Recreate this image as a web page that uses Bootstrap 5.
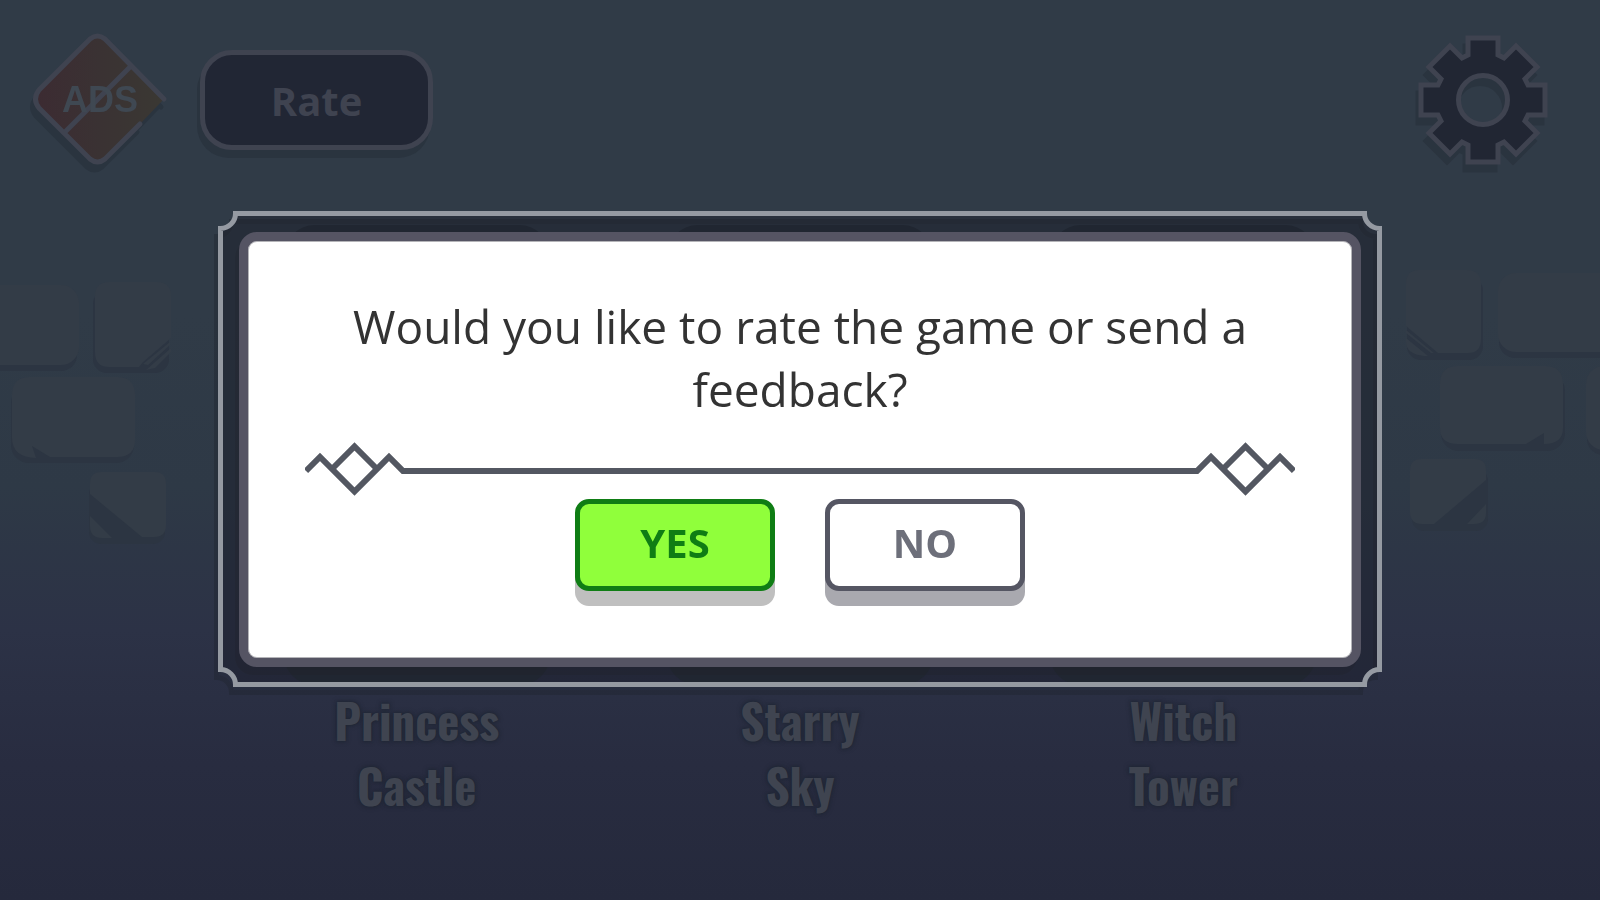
<!DOCTYPE html>
<html lang="en">
<head>
<meta charset="utf-8">
<meta name="viewport" content="width=device-width, initial-scale=1">
<title>Rate the game</title>
<link href="https://cdn.jsdelivr.net/npm/bootstrap@5.3.0/dist/css/bootstrap.min.css" rel="stylesheet">
<style>
  body {
    font-family: "Open Sans", "Noto Sans", sans-serif;
    background: linear-gradient(#303b47 0%, #303b47 35%, #2e3946 54%, #2c3246 70%, #282c40 85%, #25293c 100%);
  }
  .top-bar { padding: 30px 47px 0 28px; }
  .icon-btn { width: 140px; height: 140px; }
  .icon-btn svg { display: block; overflow: visible; }
  .cast { filter: drop-shadow(-3px 8px 0 #2a343f); }
  .rate-btn {
    width: 233px; height: 100px; margin-left: 32px; padding: 2px 0 0;
    border: 5px solid #3f4350; border-radius: 32px;
    background: #212634; color: #3f4350;
    font-size: 40px; line-height: 54px;
    box-shadow: -3px 8px 0 #2a343f;
  }
  .bricks { top: 260px; z-index: -1; }
  .stone { fill: #333c47; }
  .shade { fill: #2c3542; }
  .level-list { max-width: 1150px; margin-top: 55px; }
  .level-card { width: 268px; height: 460px; border-radius: 32px; background: #262e38; margin-bottom: 3px; }
  .level-name {
    font-family: Oswald, Roboto, sans-serif;
    font-size: 47px; line-height: 65px; color: #3f4450;
    text-shadow: 0 0 5px #1f2633, 0 0 3px #1f2633;
  }
  .ask-dialog { max-width: 1164px; padding-bottom: 2px; }
  .frame {
    border-style: solid; border-width: 21px 21px 20px;
    border-image: url("data:image/svg+xml,%3Csvg xmlns='http://www.w3.org/2000/svg' width='100' height='100'%3E%3Cpath d='M17.500 2.500H82.500A15 15 0 0 0 97.500 17.500V82.500A15 15 0 0 0 82.500 97.500H17.500A15 15 0 0 0 2.500 82.500V17.500A15 15 0 0 0 17.500 2.500Z' fill='%231c1e28' fill-opacity='.35' stroke='%23959aa2' stroke-width='5'/%3E%3C/svg%3E") 20 fill / 20px stretch;
    filter: drop-shadow(-4px 8px 0 rgba(28, 34, 44, .35));
  }
  .panel {
    border: 9px solid #555463; border-radius: 18px; background: #fff;
    padding: 54px 57px 52px; box-shadow: inset 0 0 0 1px #b4b4b8;
  }
  .question { font-size: 46px; line-height: 63px; color: #333; padding: 0 30px; }
  .divider { margin: 21px 0 3px; color: #535761; }
  .divider-line { height: 6px; background: #535761; margin-top: 4px; }
  .choice { width: 200px; height: 92px; border: 5px solid; border-radius: 14px; font-size: 40px; line-height: 54px; padding: 0 0 4px; }
  .choice-yes { background: #90ff3b; border-color: #0f7d14; color: #0f7d14; box-shadow: 0 15px 0 #bfbfbf; }
  .choice-no { background: #fff; border-color: #555663; color: #6d6f7a; box-shadow: 0 15px 0 #a9a9af; }
  .choices { gap: 50px; margin-bottom: 15px; }
</style>
</head>
<body class="min-vh-100 overflow-hidden">

<svg class="bricks position-absolute start-0" width="180" height="290" aria-hidden="true">
  <g class="shade">
    <rect x="-30" y="34" width="107" height="77" rx="16"/>
    <rect x="93" y="30" width="76" height="83" rx="14"/>
    <rect x="11" y="125" width="123" height="78" rx="18"/>
    <rect x="89" y="222" width="76" height="62" rx="12"/>
  </g>
  <g class="stone">
    <rect x="-30" y="25" width="109" height="80" rx="18"/>
    <path d="M109 22H157Q171 22 171 36V78L143 102L139 107H109Q95 107 95 92V36Q95 22 109 22Z"/>
    <path d="M143 104L170 82V85L148 105ZM146 110L171 88V92L155 108Z"/>
    <path d="M30 117H117Q135 117 135 135V180Q135 197 117 197H50L32 186L36 198Q12 197 12 178V135Q12 117 30 117Z"/>
    <path d="M101 212H155Q166 212 166 224V265Q166 277 154 277H142L90 234V224Q90 212 101 212Z"/>
    <path d="M90 256L112 278H102Q90 278 90 266Z"/>
  </g>
</svg>
<svg class="bricks position-absolute end-0" width="200" height="290" aria-hidden="true">
  <g class="shade">
    <rect x="7" y="17" width="76" height="83" rx="14"/>
    <rect x="99" y="20" width="140" height="78" rx="16"/>
    <rect x="41" y="113" width="124" height="78" rx="18"/>
    <rect x="187" y="113" width="80" height="82" rx="16"/>
    <rect x="12" y="209" width="76" height="62" rx="12"/>
  </g>
  <g class="stone">
    <path d="M19 10H67Q81 10 81 24V79Q81 93 68 93H38L6 66V24Q6 10 19 10Z"/>
    <path d="M6 70L34 93H31L6 73ZM6 78L28 96H24Q6 94 6 82Z"/>
    <rect x="98" y="13" width="140" height="79" rx="18"/>
    <path d="M58 106H145Q163 106 163 124V168Q163 184 144 184L144 173L126 184H58Q40 184 40 168V124Q40 106 58 106Z"/>
    <rect x="186" y="106" width="80" height="84" rx="18"/>
    <path d="M21 199H75Q86 199 86 211V220L34 264H22Q10 264 10 252V211Q10 199 21 199Z"/>
    <path d="M86 244V253Q86 264 74 264H67Z"/>
  </g>
</svg>

<header class="top-bar d-flex align-items-center">
  <button type="button" class="icon-btn btn p-0 border-0" aria-label="Remove ads">
    <svg class="cast" width="140" height="140" viewBox="0 0 140 140">
      <defs><linearGradient id="adsFill"><stop offset="0" stop-color="#3c2b32"/><stop offset=".5" stop-color="#3a3233"/><stop offset="1" stop-color="#3a3833"/></linearGradient></defs>
      <path d="M136 69L77 9Q69.500 3 62 9L11 60Q4 69 11 78L62 129Q69.500 135 77 129L112 94L136 69Z" fill="url(#adsFill)"/>
      <path d="M136 69L77 9Q69.500 3 62 9L11 60Q4 69 11 78L62 129Q69.500 135 77 129L112 94M102 37L37 102" fill="none" stroke="#3f4350" stroke-width="5" stroke-linecap="round"/>
      <text x="72" y="82" text-anchor="middle" font-family="Liberation Sans, sans-serif" font-weight="700" font-size="36" fill="#3f4852">ADS</text>
    </svg>
  </button>
  <button type="button" class="rate-btn btn fw-bold">Rate</button>
  <button type="button" class="icon-btn btn p-0 border-0 ms-auto" aria-label="Settings">
    <svg class="cast" width="140" height="140" viewBox="-70 -70 140 140">
      <path fill-rule="evenodd" fill="#212633" stroke="#3f4350" stroke-width="5" d="M-15 -62H15V-45L21 -42L33 -54L54 -33L42 -21L45 -15H62V15H45L42 21L54 33L33 54L21 42L15 45V62H-15V45L-21 42L-33 54L-54 33L-42 21L-45 15H-62V-15H-45L-42 -21L-54 -33L-33 -54L-21 -42L-15 -45ZM24.500 0A24.500 24.500 0 1 0 -24.500 0A24.500 24.500 0 1 0 24.500 0Z"/>
    </svg>
  </button>
</header>

<main class="level-list row g-0 mx-auto text-center">
  <div class="col-4"><div class="level-card mx-auto"></div><div class="level-name fw-bold">Princess<br>Castle</div></div>
  <div class="col-4"><div class="level-card mx-auto"></div><div class="level-name fw-bold">Starry<br>Sky</div></div>
  <div class="col-4"><div class="level-card mx-auto"></div><div class="level-name fw-bold">Witch<br>Tower</div></div>
</main>

<div class="modal d-block" role="dialog" aria-modal="true" aria-labelledby="question">
  <div class="ask-dialog modal-dialog modal-dialog-centered my-0 min-vh-100">
    <div class="frame w-100 pe-auto">
      <div class="panel">
        <p id="question" class="question text-center mb-0">Would you like to rate the game or send a feedback?</p>
        <div class="divider d-flex align-items-center" aria-hidden="true">
          <svg class="flex-shrink-0" width="99" height="54" viewBox="0 0 99 54" fill="none" stroke="currentColor" stroke-width="6"><path d="M1 29L15 15L49.500 49.500L84 15L98 29H99M27 27L49.500 4.500L72 27"/></svg>
          <div class="divider-line flex-grow-1"></div>
          <svg class="flex-shrink-0" width="99" height="54" viewBox="0 0 99 54" fill="none" stroke="currentColor" stroke-width="6"><path d="M98 29L84 15L49.500 49.500L15 15L1 29H0M72 27L49.500 4.500L27 27"/></svg>
        </div>
        <div class="choices d-flex justify-content-center">
          <button type="button" class="choice choice-yes btn fw-bold">YES</button>
          <button type="button" class="choice choice-no btn fw-bold">NO</button>
        </div>
      </div>
    </div>
  </div>
</div>

<script src="https://cdn.jsdelivr.net/npm/bootstrap@5.3.0/dist/js/bootstrap.bundle.min.js"></script>
</body>
</html>
